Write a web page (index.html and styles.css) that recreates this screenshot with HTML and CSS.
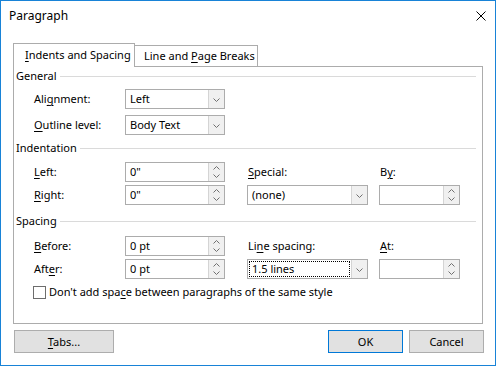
FILE: index.html
```html
<!DOCTYPE html>
<html lang="en">
<head>
  <meta charset="UTF-8" />
  <title>Paragraph</title>
  <link rel="stylesheet" href="styles.css">
</head>
<body>

  <div class="dialog">
    <div class="titlebar">
      <span class="title">Paragraph</span>
      <svg class="close" width="10" height="10" viewBox="0 0 10 10">
        <path d="M0.5 0.5 L9.5 9.5 M9.5 0.5 L0.5 9.5" stroke="#000" stroke-width="1" fill="none"/>
      </svg>
    </div>

    <div class="tabs">
      <div class="tab active"><u>I</u>ndents and Spacing</div>
      <div class="tab">Line and <u>P</u>age Breaks</div>
    </div>

    <div class="panel">
      <div class="group-title">General</div>
      <div class="grid general">
        <span class="label">Ali<u>g</u>nment:</span>
        <div class="combo"><span class="value">Left</span><span class="drop"></span></div>
        <span class="label"><u>O</u>utline level:</span>
        <div class="combo"><span class="value">Body Text</span><span class="drop"></span></div>
      </div>

      <div class="group-title">Indentation</div>
      <div class="grid wide">
        <span class="label"><u>L</u>eft:</span>
        <div class="spin"><span class="value">0"</span><span class="arrows"></span></div>
        <span class="label side"><u>S</u>pecial:</span>
        <span class="label side">B<u>y</u>:</span>

        <span class="label"><u>R</u>ight:</span>
        <div class="spin"><span class="value">0"</span><span class="arrows"></span></div>
        <div class="combo"><span class="value">(none)</span><span class="drop"></span></div>
        <div class="spin"><span class="value"></span><span class="arrows"></span></div>
      </div>

      <div class="group-title spaced">Spacing</div>
      <div class="grid wide spacing">
        <span class="label"><u>B</u>efore:</span>
        <div class="spin"><span class="value">0 pt</span><span class="arrows"></span></div>
        <span class="label side">Li<u>n</u>e spacing:</span>
        <span class="label side"><u>A</u>t:</span>

        <span class="label">Aft<u>e</u>r:</span>
        <div class="spin"><span class="value">0 pt</span><span class="arrows"></span></div>
        <div class="combo"><span class="value focused">1.5 lines</span><span class="drop"></span></div>
        <div class="spin"><span class="value"></span><span class="arrows"></span></div>
      </div>

      <div class="check-row">
        <span class="checkbox"></span>
        <span>Don't add spa<u>c</u>e between paragraphs of the same style</span>
      </div>
    </div>

    <div class="buttons">
      <div class="button tabs-btn"><u>T</u>abs...</div>
      <div class="spacer"></div>
      <div class="button default">OK</div>
      <div class="button">Cancel</div>
    </div>
  </div>

</body>
</html>
```

FILE: styles.css
```css
body {
  margin: 0;
  font-family: 'Noto Sans', sans-serif;
  font-size: 11px;
  color: #000;
  background: #fff;
}

u {
  text-decoration-thickness: 1px;
  text-underline-offset: 2px;
}

.dialog {
  width: 496px;
  height: 366px;
  box-sizing: border-box;
  border: 1px solid #1883d7;
  background: #fff;
  display: flex;
  flex-direction: column;
}

.titlebar {
  height: 30px;
  display: flex;
  align-items: center;
  padding: 0 9px 0 8px;
  flex-shrink: 0;
}

.title {
  flex: 1;
  font-size: 12px;
  line-height: 16px;
  margin-top: -1px;
}

.close {
  margin-top: -1px;
}

/* tabs */
.tabs {
  display: flex;
  align-items: flex-end;
  margin: 12px 0 0 12px;
  height: 23px;
}

.tab {
  box-sizing: border-box;
  height: 21px;
  width: 123px;
  padding-left: 9px;
  border: 1px solid #acacac;
  border-left: none;
  border-bottom: none;
  line-height: 20px;
  background: #fff;
  white-space: nowrap;
}

.tab.active {
  position: relative;
  z-index: 1;
  height: 24px;
  width: 122px;
  margin-bottom: -1px;
  padding-left: 11px;
  border-left: 1px solid #acacac;
  line-height: 22px;
}

/* panel */
.panel {
  box-sizing: border-box;
  height: 258px;
  margin: 0 12px;
  border: 1px solid #acacac;
  padding: 1px 6px 0 2px;
  flex-shrink: 0;
}

.group-title {
  display: flex;
  align-items: center;
  gap: 3px;
  height: 16px;
  line-height: 16px;
  margin-top: 5px;
}

.group-title:first-child {
  margin-top: 0;
}

.group-title.spaced {
  margin-top: 8px;
}

.group-title::after {
  content: "";
  flex: 1;
  border-top: 1px solid #dadada;
  margin-top: 1px;
}

.grid {
  display: grid;
  grid-template-columns: 91px 100px;
  grid-auto-rows: 20px;
  row-gap: 6px;
  padding-left: 18px;
  margin-top: 5px;
  align-items: center;
}

.grid.wide {
  grid-template-columns: 91px 100px 143px 92px;
  row-gap: 3px;
  margin-top: 6px;
}

.grid.wide.spacing {
  margin-top: 7px;
}

.grid.wide > :nth-child(4n+3) {
  margin-left: 22px;
}

.grid.wide > :nth-child(4n) {
  margin-left: 11px;
}

.label {
  line-height: 16px;
  white-space: nowrap;
}

.label.side {
  padding-left: 1px;
}

/* combo + spin boxes */
.combo,
.spin {
  box-sizing: border-box;
  height: 20px;
  border: 1px solid #acacac;
  display: flex;
  background: #fff;
}

.value {
  flex: 1;
  padding-left: 4px;
  line-height: 18px;
  white-space: nowrap;
  overflow: hidden;
}

.value.focused {
  margin: 1px;
  padding-left: 3px;
  line-height: 16px;
  outline: 1px dotted #000;
  outline-offset: -1px;
}

.drop,
.arrows {
  width: 15px;
  border-left: 1px solid #d4d4d4;
  background-color: #f0f0f0;
  background-repeat: no-repeat;
}

.drop {
  background-image: url("data:image/svg+xml;utf8,<svg xmlns='http://www.w3.org/2000/svg' width='7' height='4'><path d='M0.5 0.5 L3.5 3.5 L6.5 0.5' stroke='%23707070' fill='none'/></svg>");
  background-position: 4px 8px;
}

.arrows {
  background-image:
    url("data:image/svg+xml;utf8,<svg xmlns='http://www.w3.org/2000/svg' width='7' height='4'><path d='M0.5 3.5 L3.5 0.5 L6.5 3.5' stroke='%23707070' fill='none'/></svg>"),
    url("data:image/svg+xml;utf8,<svg xmlns='http://www.w3.org/2000/svg' width='7' height='4'><path d='M0.5 0.5 L3.5 3.5 L6.5 0.5' stroke='%23707070' fill='none'/></svg>");
  background-position: 4px 3px, 4px 11px;
}

/* checkbox */
.check-row {
  display: flex;
  align-items: center;
  gap: 3px;
  height: 16px;
  margin-top: 5px;
  padding-left: 17px;
  line-height: 16px;
}

.checkbox {
  box-sizing: border-box;
  width: 13px;
  height: 13px;
  border: 1px solid #6d6d6d;
  background: #fff;
}

/* bottom buttons */
.buttons {
  display: flex;
  gap: 6px;
  margin: 6px 11px 0 13px;
}

.spacer {
  flex: 1;
}

.button {
  box-sizing: border-box;
  width: 75px;
  height: 23px;
  border: 1px solid #adadad;
  background: #e1e1e1;
  text-align: center;
  line-height: 21px;
}

.button.tabs-btn {
  width: 100px;
}

.button.default {
  border-color: #0078d7;
}
```
